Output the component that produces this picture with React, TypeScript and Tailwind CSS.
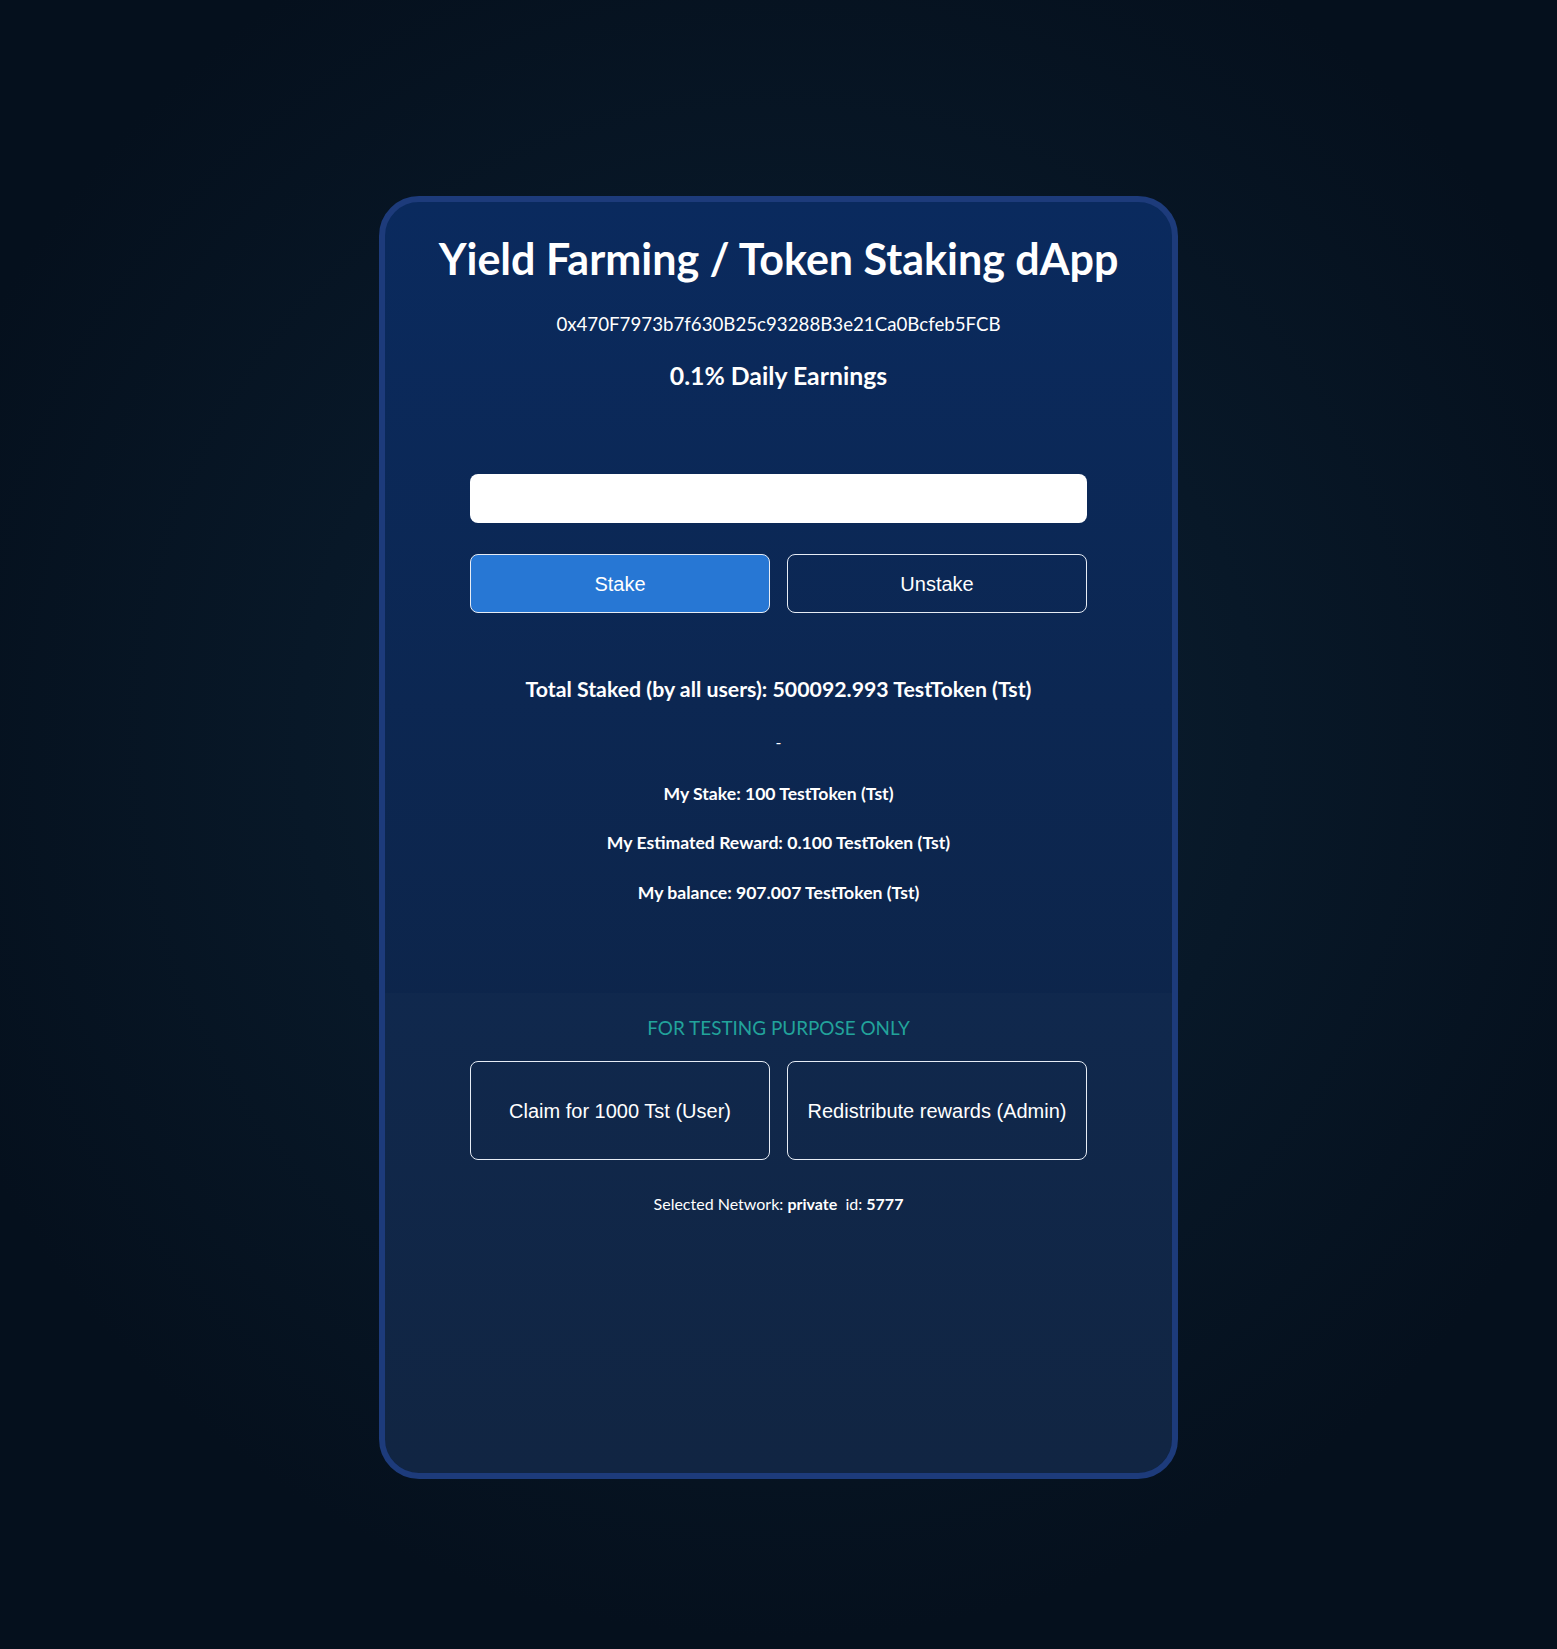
import React from "react";

const seg = "font-['Lato','Noto_Sans',sans-serif]";
const arial = "font-['Liberation_Sans',Arial,sans-serif]";

function StatLine({ children, className = "" }: { children: React.ReactNode; className?: string }) {
  return <p className={`${seg} text-white font-bold text-[17.6px] leading-[22px] text-center ${className}`}>{children}</p>;
}

export default function App() {
  const outlineBtn =
    "flex-1 rounded-lg border border-[#e6ecf5] bg-transparent text-white text-[20px] " + arial;

  return (
    <div className="min-h-screen w-full bg-[radial-gradient(circle_at_50%_45%,#0d2233_0%,#081828_40%,#05101d_75%)] flex justify-center pt-[196px] pb-[170px]">
      <div className="w-[799px] h-[1283px] rounded-[40px] border-[6px] border-[#1d3b7b] bg-gradient-to-b from-[#0a2a5e] to-[#0e2240] overflow-hidden flex flex-col">
        {/* main section */}
        <div className="h-[791px] shrink-0 flex flex-col items-center pt-[33px]">
          <h1 className={`${seg} text-white font-bold text-[43px] leading-[48px]`}>
            Yield Farming / Token Staking dApp
          </h1>
          <p className={`${seg} text-white text-[18.7px] leading-[24px] mt-[29px]`}>
            0x470F7973b7f630B25c93288B3e21Ca0Bcfeb5FCB
          </p>
          <p className={`${seg} text-white font-bold text-[24.8px] leading-[28px] mt-[26px]`}>0.1% Daily Earnings</p>

          <input
            type="text"
            className="mt-[84px] w-[617px] h-[49px] rounded-lg bg-white outline-none px-3 text-black"
          />

          <div className="mt-[31px] w-[617px] h-[59px] flex gap-[17px]">
            <button className={`flex-1 rounded-lg border border-[#e6ecf5] bg-[#2777d4] text-white text-[20px] ${arial}`}>
              Stake
            </button>
            <button className={outlineBtn}>Unstake</button>
          </div>

          <p className={`${seg} text-white font-bold text-[21.3px] leading-[26px] mt-[63px]`}>
            Total Staked (by all users): 500092.993 TestToken (Tst)
          </p>
          <p className={`${seg} text-white text-[16px] leading-[24px] mt-[28px]`}>-</p>
          <StatLine className="mt-[29px]">My Stake: 100 TestToken (Tst)</StatLine>
          <StatLine className="mt-[27px]">My Estimated Reward: 0.100 TestToken (Tst)</StatLine>
          <StatLine className="mt-[28px]">My balance: 907.007 TestToken (Tst)</StatLine>
        </div>

        {/* testing section */}
        <div className="flex-1 bg-white/[0.015] flex flex-col items-center pt-[23px]">
          <p className={`${seg} text-[#22a39b] text-[18.9px] leading-[24px]`}>FOR TESTING PURPOSE ONLY</p>
          <div className="mt-[21px] w-[617px] h-[99px] flex gap-[17px]">
            <button className={outlineBtn}>Claim for 1000 Tst (User)</button>
            <button className={outlineBtn}>Redistribute rewards (Admin)</button>
          </div>
          <p className={`${seg} text-white text-[16px] leading-[20px] mt-[34px]`}>
            Selected Network: <b>private</b>&nbsp; id: <b>5777</b>
          </p>
        </div>
      </div>
    </div>
  );
}
